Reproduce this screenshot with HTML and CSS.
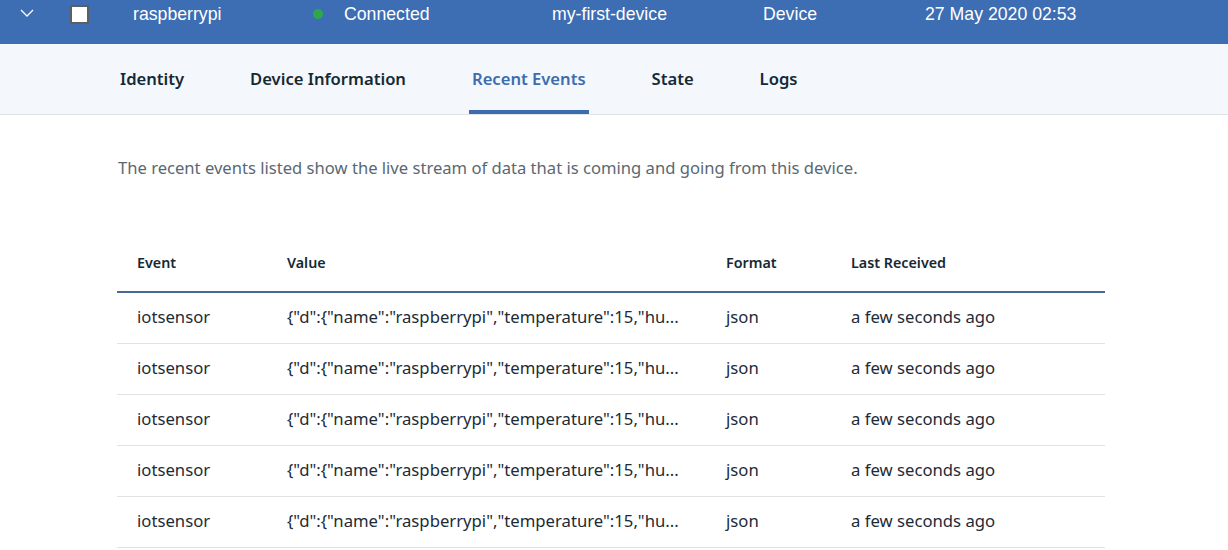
FILE: index.html
```html
<!DOCTYPE html>
<html lang="en">
<head>
<meta charset="utf-8">
<title>Device - Recent Events</title>
<link rel="stylesheet" href="styles.css">
</head>
<body>
<div class="device-row">
  <span class="chevron">
    <svg width="14" height="9" viewBox="0 0 14 9"><path d="M1 1 L7 7 L13 1" fill="none" stroke="#ffffff" stroke-width="1.3"/></svg>
  </span>
  <span class="checkbox"></span>
  <span class="cell c-name">raspberrypi</span>
  <span class="cell c-status"><span class="dot"></span>Connected</span>
  <span class="cell c-type">my-first-device</span>
  <span class="cell c-class">Device</span>
  <span class="cell c-date">27 May 2020 02:53</span>
</div>
<nav class="tabs">
  <a class="tab">Identity</a>
  <a class="tab">Device Information</a>
  <a class="tab active">Recent Events</a>
  <a class="tab">State</a>
  <a class="tab">Logs</a>
</nav>
<main class="content">
  <p class="desc">The recent events listed show the live stream of data that is coming and going from this device.</p>
  <table class="events">
    <thead>
      <tr><th class="col-event">Event</th><th class="col-value">Value</th><th class="col-format">Format</th><th class="col-last">Last Received</th></tr>
    </thead>
    <tbody>
      <tr><td>iotsensor</td><td>{"d":{"name":"raspberrypi","temperature":15,"hu...</td><td>json</td><td>a few seconds ago</td></tr>
      <tr><td>iotsensor</td><td>{"d":{"name":"raspberrypi","temperature":15,"hu...</td><td>json</td><td>a few seconds ago</td></tr>
      <tr><td>iotsensor</td><td>{"d":{"name":"raspberrypi","temperature":15,"hu...</td><td>json</td><td>a few seconds ago</td></tr>
      <tr><td>iotsensor</td><td>{"d":{"name":"raspberrypi","temperature":15,"hu...</td><td>json</td><td>a few seconds ago</td></tr>
      <tr><td>iotsensor</td><td>{"d":{"name":"raspberrypi","temperature":15,"hu...</td><td>json</td><td>a few seconds ago</td></tr>
    </tbody>
  </table>
</main>
</body>
</html>
```
FILE: styles.css
```css
html, body { margin: 0; padding: 0; background: #ffffff; }
body { font-family: "Noto Sans", "Liberation Sans", sans-serif; color: #152935; overflow: hidden; }

.device-row {
  height: 44px;
  box-sizing: border-box;
  padding-top: 4px;
  background: #3d6db3;
  display: flex;
  align-items: flex-start;
  color: #ffffff;
  font-family: "Liberation Sans", Arial, sans-serif;
  font-size: 17.7px;
  line-height: 20px;
}
.chevron { width: 14px; height: 9px; margin-left: 20px; margin-top: 5px; display: flex; }
.checkbox {
  width: 15px; height: 15px;
  background: #ffffff;
  border: 2px solid #5a5f66;
  margin-left: 36px;
  margin-top: 1px;
}
.cell { display: flex; align-items: center; }
.c-name { margin-left: 44px; width: 180px; }
.c-status { width: 239px; }
.dot { width: 10px; height: 10px; border-radius: 50%; background: #2ea84a; margin-right: 21px; margin-top: -1px; }
.c-type { width: 211px; }
.c-class { width: 162px; }

.tabs {
  height: 70px;
  background: #f4f7fb;
  border-bottom: 1px solid #dfe3e6;
  display: flex;
  align-items: stretch;
  padding-left: 117px;
  gap: 60px;
}
.tab {
  display: flex;
  align-items: center;
  padding: 0 3px;
  font-size: 16.6px;
  font-weight: 600;
  color: #152935;
  border-bottom: 4px solid transparent;
  padding-top: 2px;
}
.tab.active { color: #3d6cae; border-bottom-color: #3d6cae; }

.content { padding: 0 123px 0 117px; }
.desc { margin: 42px 0 0 1px; font-size: 16.6px; color: #5a6872; line-height: 22px; }

.events { width: 988px; border-collapse: collapse; margin-top: 54px; }
.events th {
  text-align: left;
  font-size: 14.3px;
  font-weight: 600;
  color: #152935;
  padding: 0 0 0 20px;
  height: 58px;
  border-bottom: 2px solid #47699a;
}
.events td {
  font-size: 16.7px;
  color: #1d2b36;
  padding: 0 0 3px 20px;
  height: 47px;
  border-bottom: 1px solid #dfe3e6;
  white-space: nowrap;
}
.col-event { width: 130px; }
.col-value { width: 419px; }
.col-format { width: 105px; }
```
